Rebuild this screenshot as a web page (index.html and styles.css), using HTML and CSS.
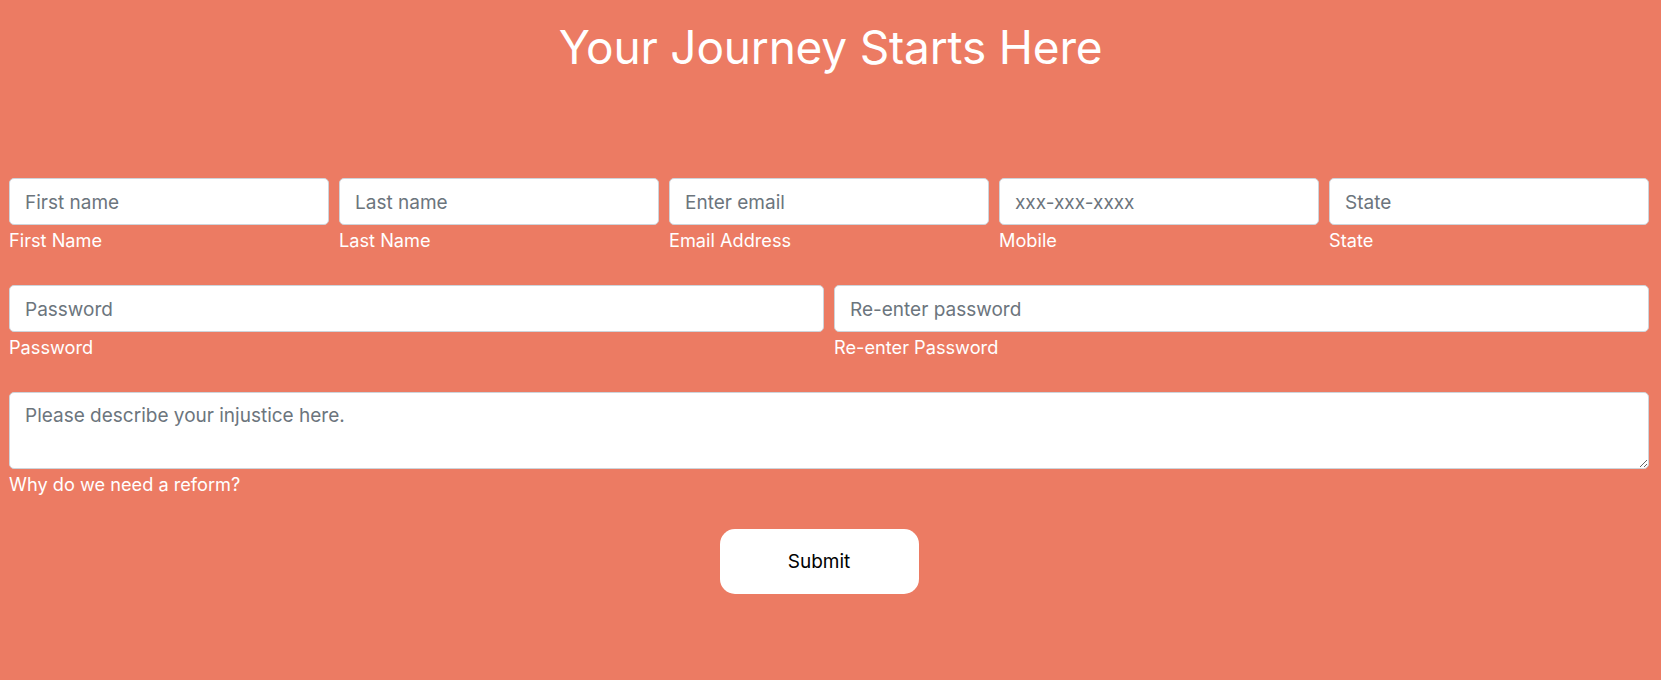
FILE: index.html
```html
<!DOCTYPE html>
<html lang="en">
<head>
<meta charset="utf-8">
<title>Your Journey Starts Here</title>
<link rel="stylesheet" href="styles.css">
</head>
<body>
<h1 class="title">Your Journey Starts Here</h1>
<form class="signup">
  <div class="row row-5">
    <div class="field">
      <input class="control" type="text" placeholder="First name">
      <label class="caption">First Name</label>
    </div>
    <div class="field">
      <input class="control" type="text" placeholder="Last name">
      <label class="caption">Last Name</label>
    </div>
    <div class="field">
      <input class="control" type="email" placeholder="Enter email">
      <label class="caption">Email Address</label>
    </div>
    <div class="field">
      <input class="control" type="tel" placeholder="xxx-xxx-xxxx">
      <label class="caption">Mobile</label>
    </div>
    <div class="field">
      <input class="control" type="text" placeholder="State">
      <label class="caption">State</label>
    </div>
  </div>
  <div class="row row-2">
    <div class="field">
      <input class="control" type="password" placeholder="Password">
      <label class="caption">Password</label>
    </div>
    <div class="field">
      <input class="control" type="password" placeholder="Re-enter password">
      <label class="caption">Re-enter Password</label>
    </div>
  </div>
  <div class="row row-1">
    <div class="field">
      <textarea class="control area" placeholder="Please describe your injustice here."></textarea>
      <label class="caption">Why do we need a reform?</label>
    </div>
  </div>
  <div class="actions">
    <button class="submit" type="button">Submit</button>
  </div>
</form>
</body>
</html>
```

FILE: styles.css
```css
* { box-sizing: border-box; }

html, body {
  margin: 0;
  padding: 0;
  height: 100%;
}

body {
  background: #ec7b63;
  font-family: Inter, "Open Sans", "Liberation Sans", sans-serif;
  color: #ffffff;
}

.title {
  margin: 0;
  padding-top: 20px;
  font-size: 46px;
  line-height: 55px;
  font-weight: 400;
  text-align: center;
  letter-spacing: -0.2px;
}

.signup {
  margin: 103px 12px 0 9px;
}

.row {
  display: grid;
  column-gap: 10px;
  margin-bottom: 31px;
}

.row-5 { grid-template-columns: repeat(5, 1fr); }
.row-2 { grid-template-columns: repeat(2, 1fr); }
.row-1 { grid-template-columns: 1fr; }

.field {
  display: flex;
  flex-direction: column;
  min-width: 0;
}

.control {
  display: block;
  width: 100%;
  height: 47px;
  padding: 9px 15px 8px;
  border: 1px solid #ced4da;
  border-radius: 5px;
  background: #ffffff;
  font-family: inherit;
  font-size: 19px;
  line-height: 28px;
  color: #495057;
  outline: none;
}

.control::placeholder {
  color: #6c757d;
  opacity: 1;
}

.area {
  height: 77px;
  resize: vertical;
}

.caption {
  margin-top: 2px;
  font-size: 18.2px;
  line-height: 27px;
  color: #ffffff;
}

.actions {
  display: flex;
  justify-content: center;
  padding-right: 20px;
}

.submit {
  width: 199px;
  height: 65px;
  border: none;
  border-radius: 15px;
  background: #ffffff;
  color: #000000;
  font-family: inherit;
  font-size: 19px;
  cursor: pointer;
}
```
